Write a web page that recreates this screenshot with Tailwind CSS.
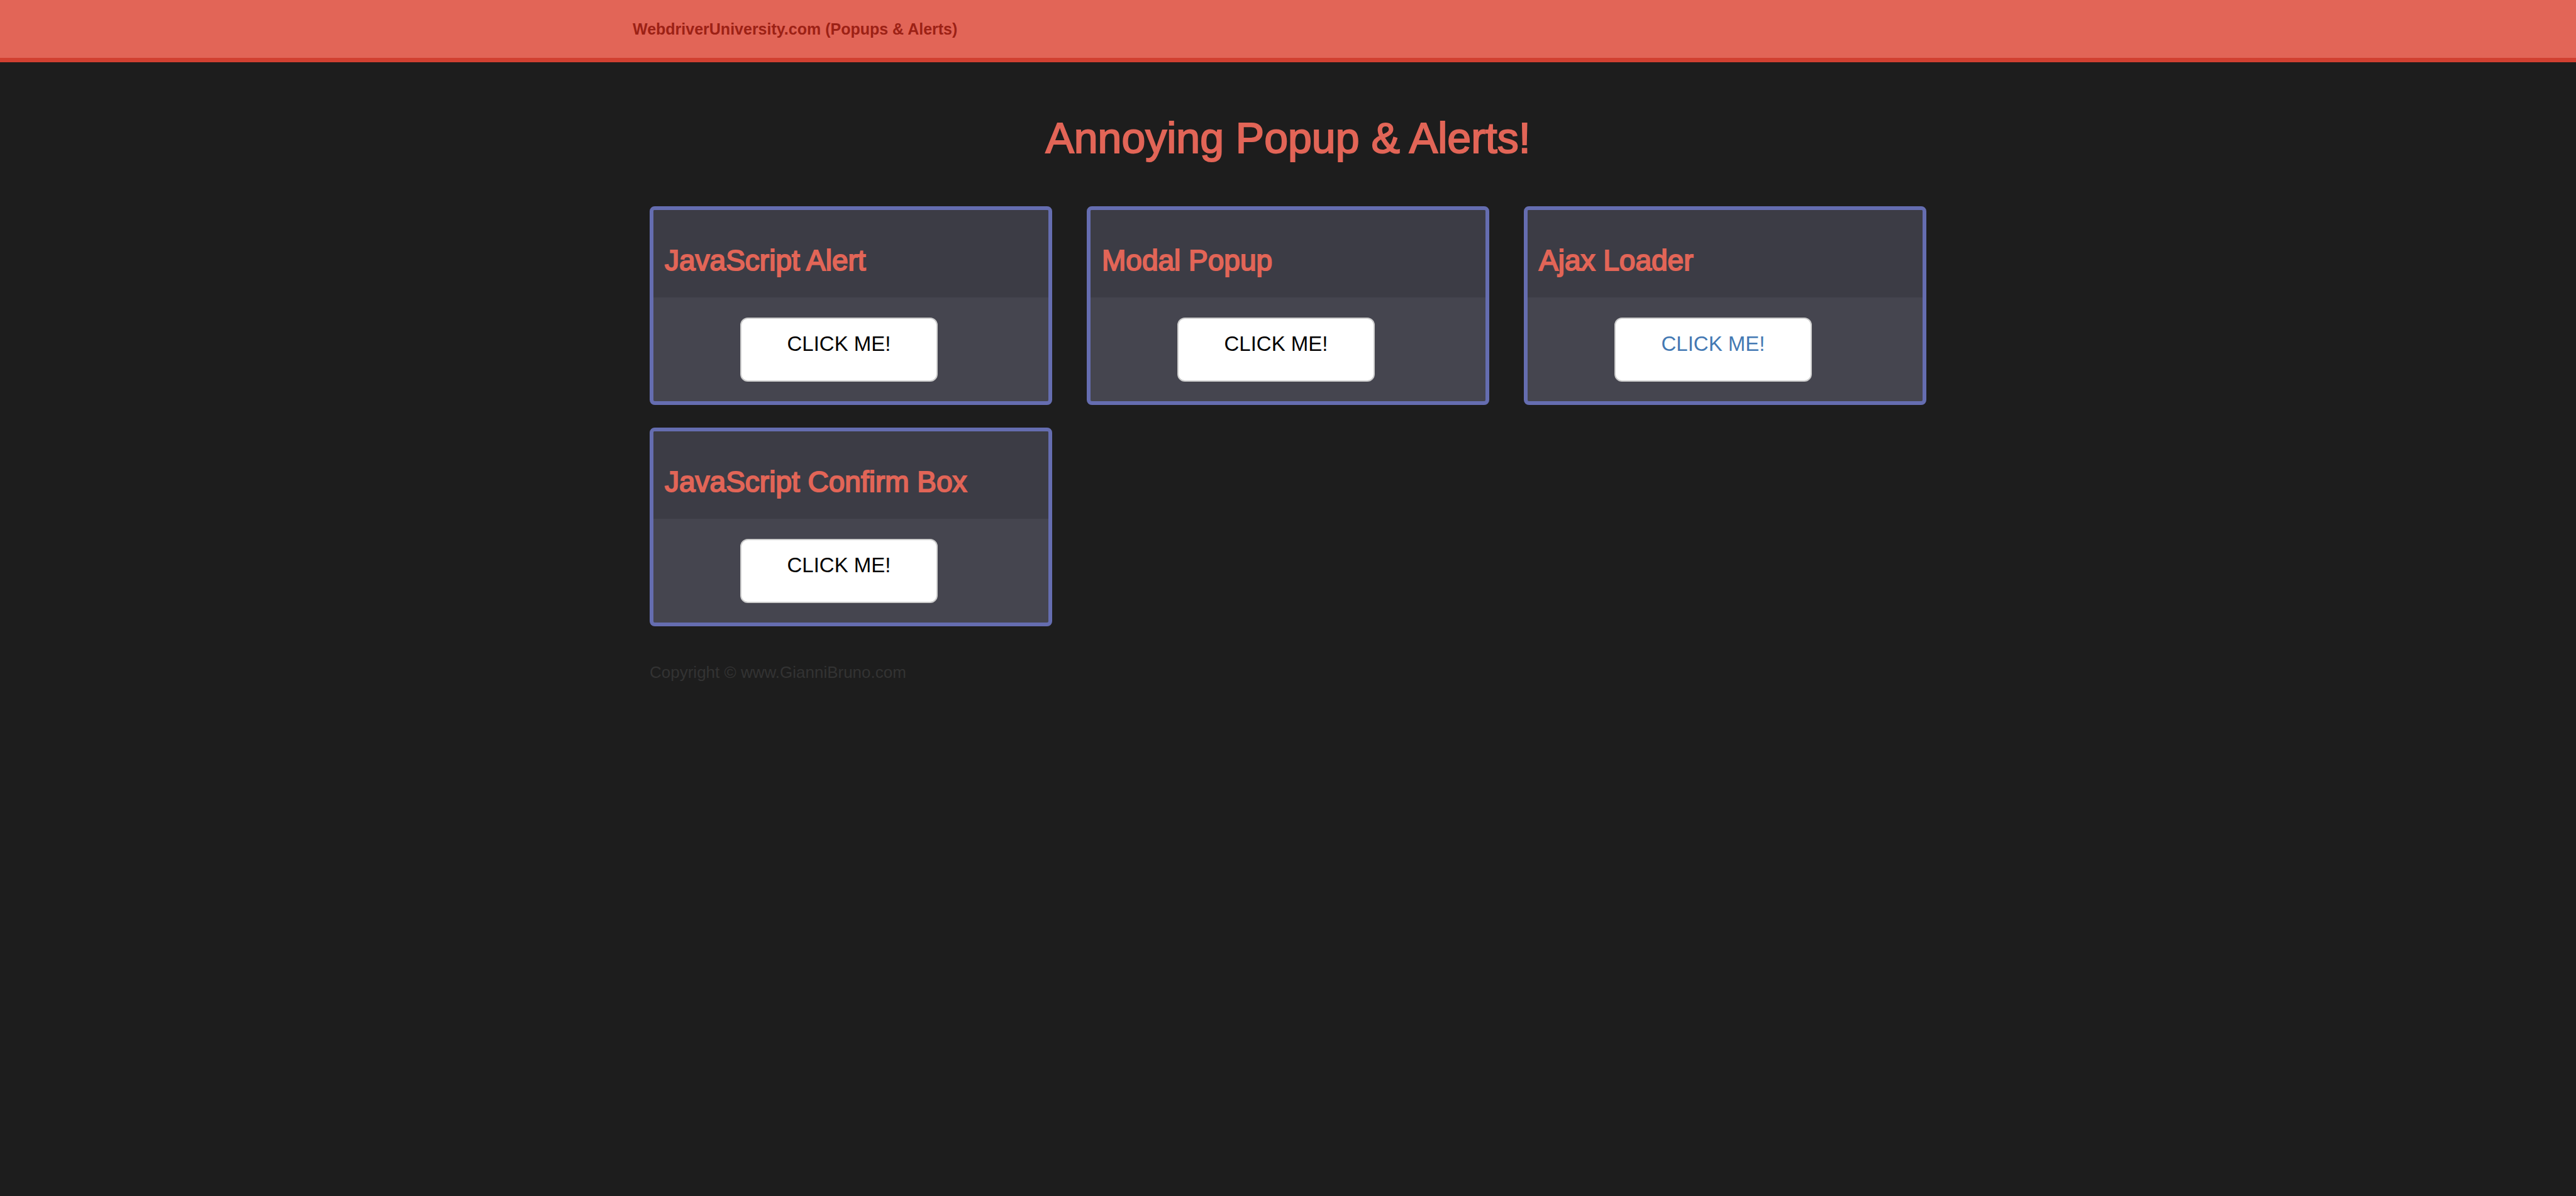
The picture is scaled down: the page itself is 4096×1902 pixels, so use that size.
<!DOCTYPE html>
<html lang="en">
<head>
<meta charset="utf-8">
<title>Popups &amp; Alerts</title>
<script src="https://cdn.jsdelivr.net/npm/@tailwindcss/browser@4"></script>
</head>
<body class="min-h-screen bg-[#1d1d1d] font-['Liberation_Sans',Arial,sans-serif]">
  <nav class="border-b-[7px] border-[#d14031] bg-[#e26557]">
    <div class="mx-auto flex h-[92px] max-w-[2140px] items-center px-7">
      <a href="#" class="text-[25px] leading-[36px] font-bold text-[#9c2115]">WebdriverUniversity.com (Popups &amp; Alerts)</a>
    </div>
  </nav>
  <main class="mx-auto max-w-[2140px] px-[55px] pt-[84px]">
    <h1 class="text-center text-[68px] leading-[72px] text-[#e26557] [-webkit-text-stroke:2px_#e26557]">Annoying Popup &amp; Alerts!</h1>
    <div class="mt-[73px] grid grid-cols-3 gap-x-[55px] gap-y-9">
      <section class="h-[316px] overflow-hidden rounded-lg border-6 border-[#656db0] bg-[#45454f]">
        <div class="flex h-[139px] items-center bg-[#3c3c45] px-[18px] pt-5">
          <h2 class="text-[46px] leading-[48px] text-[#e26557] [-webkit-text-stroke:2px_#e26557]">JavaScript Alert</h2>
        </div>
        <div class="pt-8 pl-[138px]">
          <button class="block h-[102px] w-[314px] rounded-xl border-2 border-[#cccccc] bg-white pb-[18px] text-[33px] leading-[36px] text-black">CLICK ME!</button>
        </div>
      </section>
      <section class="h-[316px] overflow-hidden rounded-lg border-6 border-[#656db0] bg-[#45454f]">
        <div class="flex h-[139px] items-center bg-[#3c3c45] px-[18px] pt-5">
          <h2 class="text-[46px] leading-[48px] text-[#e26557] [-webkit-text-stroke:2px_#e26557]">Modal Popup</h2>
        </div>
        <div class="pt-8 pl-[138px]">
          <button class="block h-[102px] w-[314px] rounded-xl border-2 border-[#cccccc] bg-white pb-[18px] text-[33px] leading-[36px] text-black">CLICK ME!</button>
        </div>
      </section>
      <section class="h-[316px] overflow-hidden rounded-lg border-6 border-[#656db0] bg-[#45454f]">
        <div class="flex h-[139px] items-center bg-[#3c3c45] px-[18px] pt-5">
          <h2 class="text-[46px] leading-[48px] text-[#e26557] [-webkit-text-stroke:2px_#e26557]">Ajax Loader</h2>
        </div>
        <div class="pt-8 pl-[138px]">
          <button class="block h-[102px] w-[314px] rounded-xl border-2 border-[#cccccc] bg-white pb-[18px] text-[33px] leading-[36px] text-[#4479b3]">CLICK ME!</button>
        </div>
      </section>
      <section class="h-[316px] overflow-hidden rounded-lg border-6 border-[#656db0] bg-[#45454f]">
        <div class="flex h-[139px] items-center bg-[#3c3c45] px-[18px] pt-5">
          <h2 class="text-[46px] leading-[48px] text-[#e26557] [-webkit-text-stroke:2px_#e26557]">JavaScript Confirm Box</h2>
        </div>
        <div class="pt-8 pl-[138px]">
          <button class="block h-[102px] w-[314px] rounded-xl border-2 border-[#cccccc] bg-white pb-[18px] text-[33px] leading-[36px] text-black">CLICK ME!</button>
        </div>
      </section>
    </div>
    <footer class="mt-[55px]">
      <p class="text-[26px] leading-[36px] text-[#333333]">Copyright © www.GianniBruno.com</p>
    </footer>
  </main>
</body>
</html>
